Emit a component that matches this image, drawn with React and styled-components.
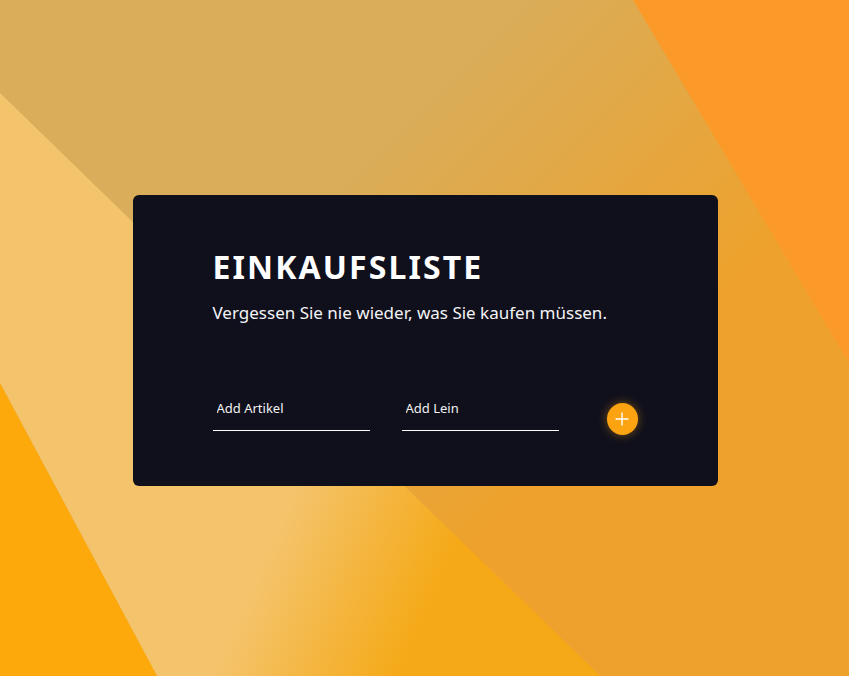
import React from "react";
import styled, { createGlobalStyle } from "styled-components";

const GlobalStyle = createGlobalStyle`
  * {
    box-sizing: border-box;
  }
  body {
    margin: 0;
    font-family: "Noto Sans", "Open Sans", sans-serif;
  }
`;

const Page = styled.div`
  position: relative;
  width: 100%;
  height: 100vh;
  overflow: hidden;
  display: flex;
  align-items: center;
  justify-content: center;
`;

const Backdrop = styled.svg`
  position: absolute;
  inset: 0;
  width: 100%;
  height: 100%;
  z-index: 0;
`;

const Card = styled.div`
  position: relative;
  z-index: 1;
  width: 585px;
  height: 291px;
  margin: 5px 0 0 1px;
  padding: 52px 80px 0;
  background: #10101c;
  border-radius: 6px;
  color: #fff;
`;

const Title = styled.h1`
  margin: 0;
  font-size: 32px;
  font-weight: 700;
  letter-spacing: 2.1px;
  line-height: 40px;
`;

const Subtitle = styled.p`
  margin: 14px 0 0;
  font-size: 17px;
  line-height: 24px;
  color: #f4f4f6;
`;

const Form = styled.form`
  display: flex;
  align-items: center;
  gap: 32px;
  margin-top: 66px;
`;

const Field = styled.input`
  width: 157px;
  height: 36px;
  padding: 0 4px 10px;
  background: transparent;
  border: none;
  border-bottom: 1px solid #fff;
  color: #fff;
  font-family: inherit;
  font-size: 13px;
  outline: none;
  &::placeholder {
    color: #f2f2f2;
  }
`;

const AddButton = styled.button`
  display: flex;
  align-items: center;
  justify-content: center;
  width: 32px;
  height: 32px;
  margin: 12px 0 0 16px;
  padding: 0;
  border: none;
  border-radius: 50%;
  background: #fca312;
  box-shadow: 0 0 10px rgba(252, 163, 18, 0.45);
  cursor: pointer;
`;

function PlusIcon() {
  return (
    <svg width="14" height="14" viewBox="0 0 14 14">
      <path d="M7 1v12M1 7h12" stroke="#fff" strokeWidth="1.4" strokeLinecap="round" />
    </svg>
  );
}

function Background() {
  return (
    <Backdrop viewBox="0 0 849 676" preserveAspectRatio="none">
      <defs>
        <linearGradient id="upper" gradientUnits="userSpaceOnUse" x1="430" y1="80" x2="680" y2="330">
          <stop offset="0" stopColor="#d9ad5a" />
          <stop offset="1" stopColor="#eea22d" />
        </linearGradient>
        <linearGradient id="lower" gradientUnits="userSpaceOnUse" x1="270" y1="540" x2="430" y2="610">
          <stop offset="0" stopColor="#f4c46d" />
          <stop offset="1" stopColor="#f5a916" />
        </linearGradient>
      </defs>
      <rect x="0" y="0" width="849" height="676" fill="url(#upper)" />
      <polygon points="0,93 600,676 157,676 0,383" fill="url(#lower)" />
      <polygon points="633,0 849,0 849,363" fill="#fc9a29" />
      <polygon points="0,383 157,676 0,676" fill="#fea90b" />
    </Backdrop>
  );
}

export default function App() {
  return (
    <>
      <GlobalStyle />
      <Page>
        <Background />
        <Card>
          <Title>EINKAUFSLISTE</Title>
          <Subtitle>Vergessen Sie nie wieder, was Sie kaufen müssen.</Subtitle>
          <Form onSubmit={(e) => e.preventDefault()}>
            <Field placeholder="Add Artikel" />
            <Field placeholder="Add Lein" />
            <AddButton type="submit" aria-label="Hinzufügen">
              <PlusIcon />
            </AddButton>
          </Form>
        </Card>
      </Page>
    </>
  );
}
